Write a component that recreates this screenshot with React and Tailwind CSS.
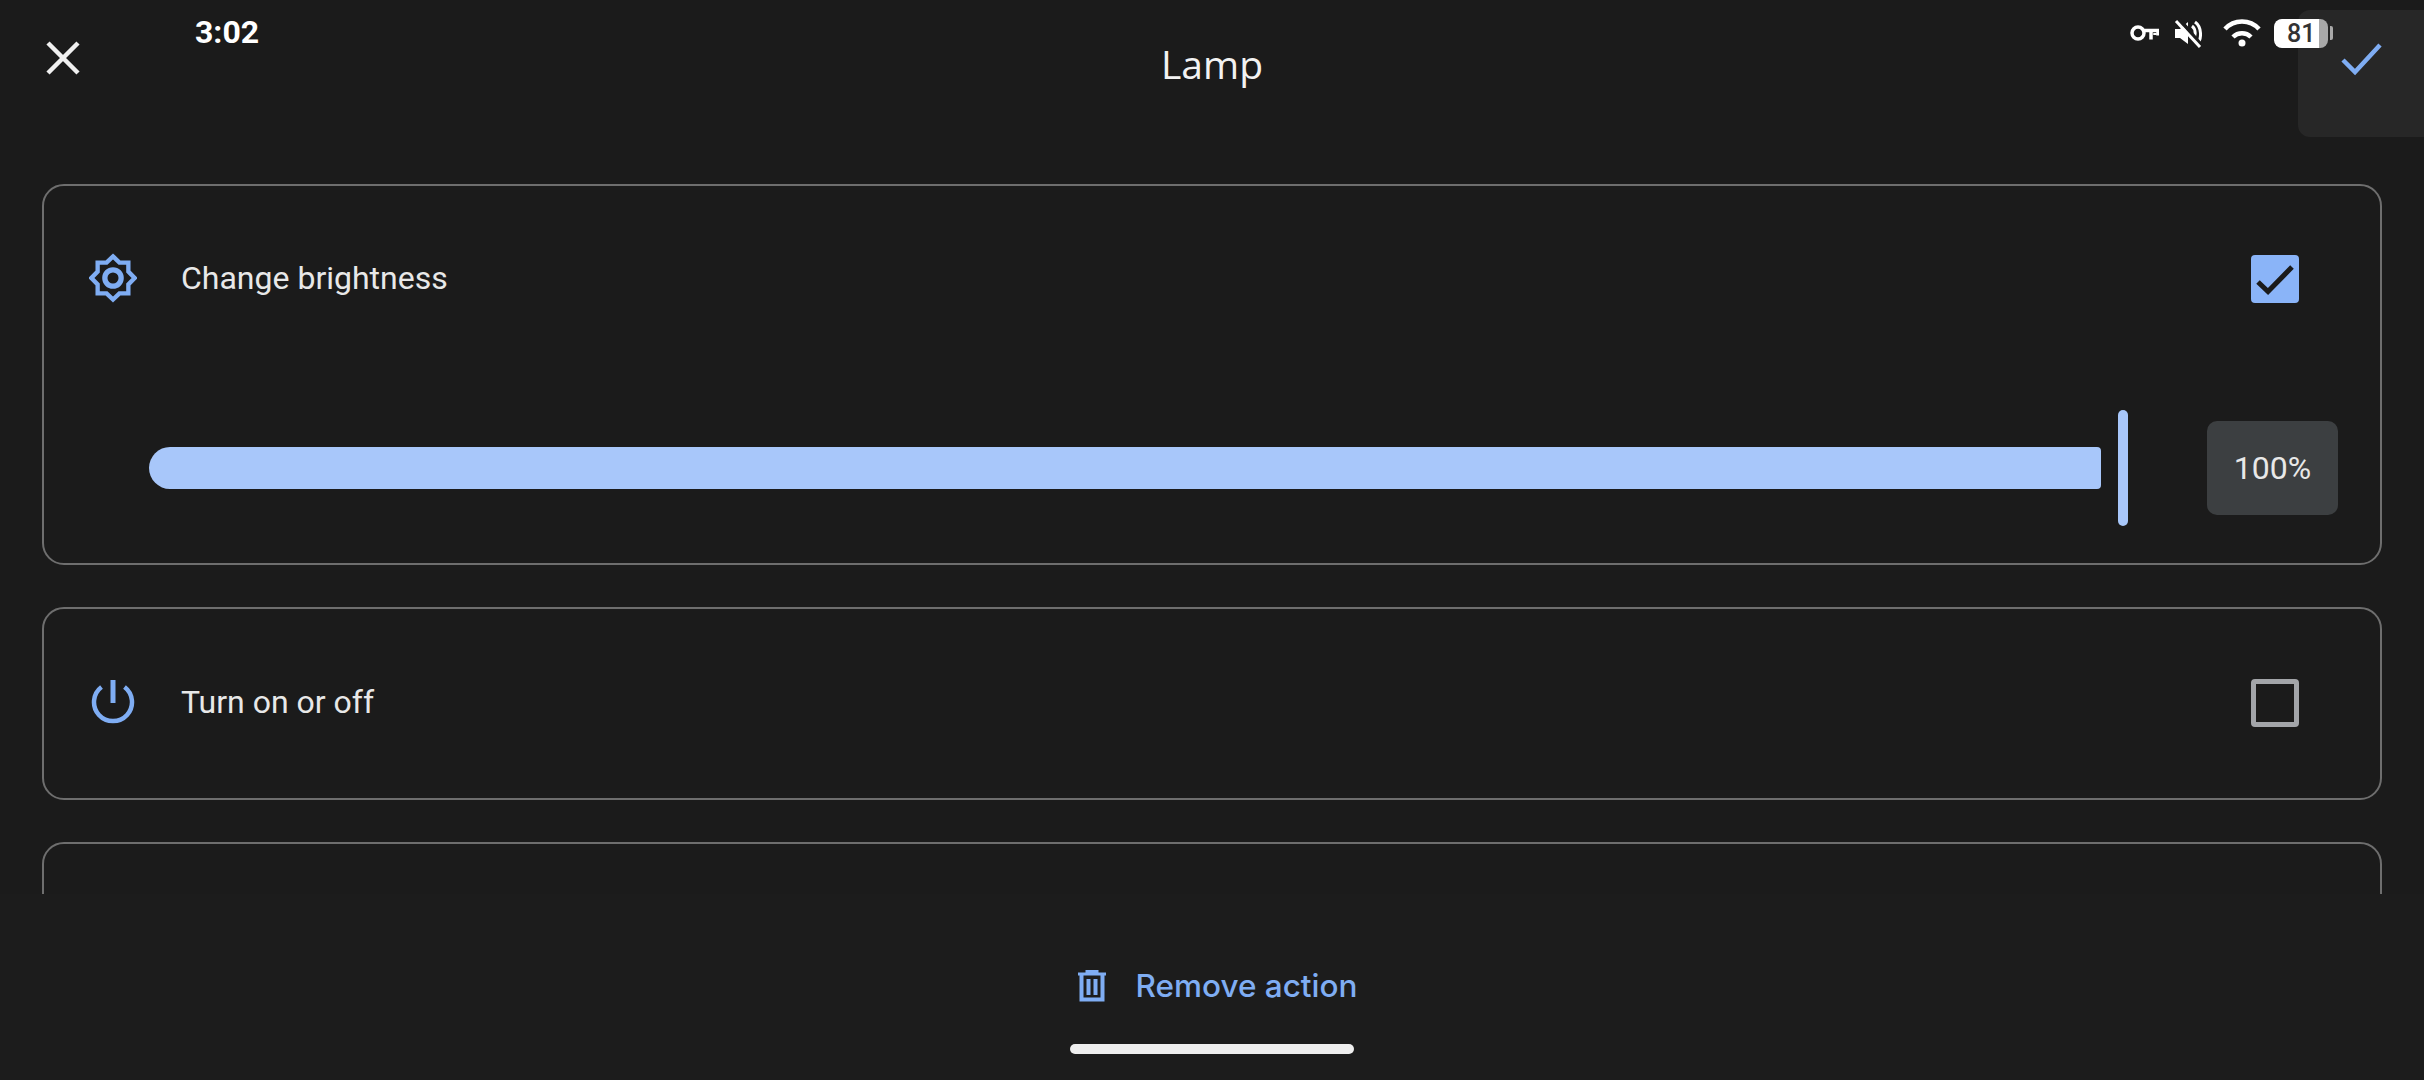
const BLUE = "#7fadf3";

function StatusBar() {
  return (
    <>
      <span className="absolute left-[195px] top-[14px] text-[32px] leading-[36px] font-bold text-white font-['Roboto',sans-serif]">
        3:02
      </span>
      <div className="absolute left-[2130px] top-[18px] flex items-center">
        {/* key */}
        <svg width="29" height="30" viewBox="0 0 29 30" fill="none" stroke="#fff">
          <circle cx="8" cy="15" r="6" strokeWidth="3.500" />
          <path d="M14 12.500h14v5" strokeWidth="3.500" />
          <path d="M21 12v9.500M25 15v2" strokeWidth="3.500" />
        </svg>
        {/* muted speaker */}
        <svg className="ml-[15px]" width="28" height="30" viewBox="0 0 28 30" fill="none">
          <path d="M1 11h5l8-7v22l-8-6H1z" fill="#fff" />
          <path d="M18 8c4 3 4 10 1 14M21 4c7 5 7 17 2 22" stroke="#fff" strokeWidth="3" />
          <path d="M5 1l23 27" stroke="#1b1b1b" strokeWidth="4" />
          <path d="M2 3l24 26" stroke="#fff" strokeWidth="3" />
        </svg>
        {/* wifi */}
        <svg className="ml-[21px]" width="38" height="30" viewBox="0 0 38 30" fill="none" stroke="#fff" strokeWidth="4.500">
          <path d="M2 11C11 1 27 1 36 11" />
          <path d="M10 19c5-5 13-5 18 0" />
          <circle cx="19" cy="25" r="3.500" fill="#fff" stroke="none" />
        </svg>
        {/* battery */}
        <div className="ml-[13px] flex items-center">
          <div className="relative flex h-[29px] w-[54px] overflow-hidden rounded-[8px] bg-[#a9a9a9]">
            <div className="h-full w-[45px] rounded-l-[8px] bg-white" />
            <span className="absolute left-[13px] top-0 text-[25px] leading-[29px] font-medium text-[#333] font-['Roboto',sans-serif]">
              81
            </span>
          </div>
          <div className="ml-[2px] h-[14px] w-[3px] rounded-r-[2px] bg-[#a9a9a9]" />
        </div>
      </div>
    </>
  );
}

function Card({ icon, label, checked, children, className, rowClass }) {
  return (
    <section className={`shrink-0 rounded-[22px] border-2 border-[#6e6e6e] ${className}`}>
      <div className={`flex items-center pl-[45px] pr-[81px] ${rowClass}`}>
        <div className="flex w-[48px] justify-center">{icon}</div>
        <span className="ml-[44px] flex-1 pb-[2px] text-[32px] leading-[40px] text-[#e8e8e8] font-['Roboto',sans-serif]">
          {label}
        </span>
        {checked ? (
          <div className="flex h-[48px] w-[48px] items-center justify-center rounded-[4px] bg-[#8ab4f8]">
            <svg width="48" height="48" viewBox="0 0 48 48" fill="none" stroke="#1b1b1b" strokeWidth="5">
              <path d="M7 27l10 9.500L41 12" />
            </svg>
          </div>
        ) : (
          <div className="h-[48px] w-[48px] rounded-[4px] border-[5px] border-[#a3a5a9]" />
        )}
      </div>
      {children}
    </section>
  );
}

export default function App() {
  return (
    <div className="relative flex h-[1080px] w-[2424px] flex-col overflow-hidden bg-[#1b1b1b]">
      <StatusBar />

      <header className="grid h-[184px] shrink-0 grid-cols-[1fr_auto_1fr] items-start">
        <button className="ml-[44px] mt-[39px] justify-self-start">
          <svg width="38" height="38" viewBox="0 0 38 38" fill="none" stroke="#f0f0f0" strokeWidth="4.500">
            <path d="M4 4l30 30M34 4L4 34" />
          </svg>
        </button>
        <h1 className="mt-[38px] text-[39px] leading-[52px] text-[#f2f2f2] font-['Open_Sans',sans-serif]">
          Lamp
        </h1>
        <button className="mt-[10px] flex h-[127px] w-[126px] items-start justify-start justify-self-end rounded-l-[12px] bg-[#272727] pl-[42px] pt-[30px]">
          <svg width="44" height="36" viewBox="0 0 44 36" fill="none" stroke={BLUE} strokeWidth="4.500">
            <path d="M3 20l12 12L40 5" />
          </svg>
        </button>
      </header>

      <main className="flex h-[710px] shrink-0 flex-col gap-[42px] overflow-hidden px-[42px]">
        <Card
          className="h-[381px]"
          rowClass="h-[186px]"
          checked
          label="Change brightness"
          icon={
            <svg className="mb-[2px]" width="52" height="52" viewBox="0 0 50 50" fill="none" stroke={BLUE}>
              <path
                d="M25 2.500L31.700 9H41V18.300L47.500 25L41 31.700V41H31.700L25 47.500L18.300 41H9V31.700L2.500 25L9 18.300V9H18.300Z"
                strokeWidth="4.500"
              />
              <circle cx="25" cy="25" r="8.500" strokeWidth="5.500" />
            </svg>
          }
        >
          <div className="mt-[38px] flex items-center pl-[105px]">
            <div className="h-[42px] w-[1952px] rounded-l-[21px] rounded-r-[4px] bg-[#a8c7fa]" />
            <div className="ml-[17px] h-[116px] w-[10px] rounded-full bg-[#a8c7fa]" />
            <div className="ml-[79px] flex h-[94px] w-[131px] items-center justify-center rounded-[10px] bg-[#3c3f41] text-[32px] text-[#e8e8e8] font-['Roboto',sans-serif]">
              100%
            </div>
          </div>
        </Card>

        <Card
          className="h-[193px]"
          rowClass="h-[188px]"
          label="Turn on or off"
          icon={
            <svg width="44" height="46" viewBox="0 0 44 46" fill="none" stroke={BLUE} strokeWidth="4.500">
              <path d="M10.500 7a19 19 0 1 0 23 0" />
              <path d="M22 0v23" strokeWidth="5" />
            </svg>
          }
        />

        <section className="h-[193px] shrink-0 rounded-[22px] border-2 border-[#6e6e6e]" />
      </main>

      <footer className="flex flex-1 flex-col items-center bg-[#1c1c1c]">
        <button className="ml-[11px] mt-[72px] flex items-center">
          <svg width="28" height="32" viewBox="0 0 28 32" fill="none" stroke={BLUE}>
            <path d="M0 4h28M9 3V1h10v2" strokeWidth="3" />
            <path d="M3.500 5v24.500h21V5" strokeWidth="4" />
            <path d="M10.500 9v16M17.500 9v16" strokeWidth="4" />
          </svg>
          <span className="ml-[30px] text-[31.500px] leading-[40px] font-medium text-[#7fadf3] font-['Inter',sans-serif]">
            Remove action
          </span>
        </button>
        <div className="mt-[38px] h-[10px] w-[284px] rounded-full bg-[#eeeeee]" />
      </footer>
    </div>
  );
}
